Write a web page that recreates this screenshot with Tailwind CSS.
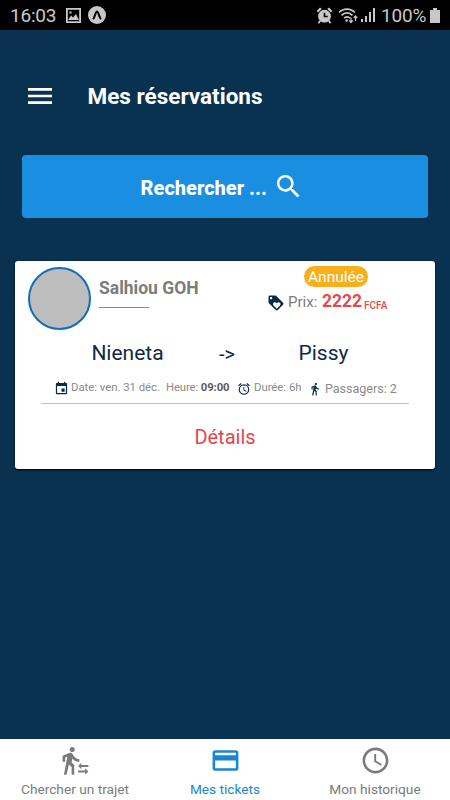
<!DOCTYPE html>
<html lang="fr">
  <head>
    <meta charset="utf-8" />
    <meta name="viewport" content="width=device-width, initial-scale=1" />
    <title>Mes réservations</title>
    <script src="https://cdn.jsdelivr.net/npm/@tailwindcss/browser@4"></script>
  </head>
  <body class="bg-[#093251] font-['Roboto',sans-serif]">
    <div class="flex flex-col h-[800px] w-[450px] overflow-hidden whitespace-nowrap">

      <!-- status bar -->
      <div class="flex items-center h-[30px] shrink-0 bg-black text-[#c8c8c8] pl-2.5 pr-[10px]">
        <span class="text-[19px] leading-[30px] w-14 pt-px tracking-[-0.2px]">16:03</span>
        <svg class="w-[15px] h-[15px]" viewBox="0 0 15 15" fill="none" stroke="currentColor"><path stroke-width="1.800" d="M.9.9h13.200v13.200H.9z"/><path fill="currentColor" stroke="none" d="M2 12l3-4.500 2 2 3-3.500 3 6zM3.500 3.500h2v2h-2z"/></svg>
        <svg class="w-[18px] h-[18px] ml-[7px]" viewBox="0 0 18 18"><circle cx="9" cy="9" r="9" fill="currentColor"/><path d="M5.500 12.500C7 10.500 7.600 5.500 9 5.500s2 5 3.500 7" fill="none" stroke="#000" stroke-width="2" stroke-linecap="round"/></svg>
        <div class="flex items-center ml-auto">
          <svg class="w-[17px] h-[17px]" viewBox="0 0 24 24" fill="currentColor"><path d="M23 5.700l-4.600-5-2.600 2.200 5.300 5zM8.200 2.900L5.600.7 1 5.700l1.900 2.200z"/><circle cx="12" cy="13" r="9"/><path d="M12 8v5.500h4.500" fill="none" stroke="#000" stroke-width="2.200"/><path d="M6 19.500l-2.500 3.500M18 19.500l2.500 3.500" stroke="currentColor" stroke-width="2.500"/></svg>
          <svg class="w-5 h-[17px] ml-[5px]" viewBox="0 0 20 17" fill="none" stroke="currentColor" stroke-width="1.700"><path d="M1 5.500c4.500-4.600 11.500-4.600 16 0M3.500 8.400c3.200-3.300 7.800-3.300 11 0M6 11.200c1.800-1.900 4.200-1.900 6 0"/><circle cx="8.600" cy="13.500" r="1.300" fill="currentColor" stroke="none"/><path stroke-width="1.200" d="M13 10.500v5m-1.700-2l1.700 2 1.700-2M17.500 14V9m-1.700 2l1.700-2 1.700 2"/></svg>
          <svg class="w-[14px] h-[14px] ml-[3px]" viewBox="0 0 14 14" fill="currentColor"><path d="M0 11h2v3H0zM4 8h2v6H4zM8 4h2v10H8zM12 0h2v14h-2z"/></svg>
          <span class="text-[19px] leading-[30px] ml-1.5 w-[47px] pt-px tracking-[-0.2px]">100%</span>
          <svg class="w-[10px] h-[15px] ml-0.5" viewBox="0 0 10 15" fill="currentColor"><path d="M3 0h4v2h3v13H0V2h3z"/></svg>
        </div>
      </div>

      <!-- header -->
      <div class="flex items-center h-[132px] -mb-[7px] pl-6 shrink-0 text-white">
        <svg class="w-8 h-8" viewBox="0 0 24 24" fill="currentColor"><path d="M3 18h18v-2H3v2zm0-5h18v-2H3v2zm0-7v2h18V6H3z"/></svg>
        <h1 class="ml-[31.500px] pt-[2px] text-[22.500px] font-bold">Mes réservations</h1>
      </div>

      <button class="flex items-center justify-center shrink-0 ml-[22px] mr-[22.500px] h-[62.500px] rounded-[4px] bg-[#1a8fe1] text-white pr-[5px]">
        <span class="text-[20px] font-extrabold pt-[3px]">Rechercher ...</span>
        <svg class="w-[31px] h-[31px] ml-1.5" viewBox="0 0 24 24" fill="currentColor"><path d="M15.500 14h-.79l-.28-.27A6.471 6.471 0 0 0 16 9.500 6.500 6.500 0 1 0 9.500 16c1.610 0 3.090-.59 4.230-1.570l.27.28v.79l5 4.990L20.490 19l-4.990-5zm-6 0C7.010 14 5 11.990 5 9.500S7.010 5 9.500 5 14 7.010 14 9.500 11.990 14 9.500 14z"/></svg>
      </button>

      <!-- ticket -->
      <div class="flex flex-col shrink-0 mt-[43.500px] mx-[15px] h-[208px] rounded-[3px] bg-white shadow-[0_1px_2px_#000]">
        <div class="flex shrink-0 h-[73px] pl-[13px] pt-[5.500px]">
          <div class="w-[63px] h-[63px] rounded-full bg-[#bdbdbd] border-2 border-[#0f6fb8]"></div>
          <div class="ml-[8px] pt-[10px] w-[168px]">
            <div class="text-[17.500px] leading-[22px] font-bold text-[#7c7c7c]">Salhiou GOH</div>
            <div class="w-[50px] h-px mt-[8px] bg-[#4c9bd0]"></div>
          </div>
          <div class="w-[136px]">
            <div class="ml-[37px] -mt-[0.500px] w-[64px] h-[21px] rounded-full bg-[#f9ae1b] text-white text-[15.500px] leading-[23px] text-center">Annulée</div>
            <div class="flex items-baseline h-6 mt-[1.500px] leading-6">
              <svg class="w-[18px] h-[18px] self-center mt-1" viewBox="0 0 24 24" fill="#0a2a4a"><path d="M21.410 11.580l-9-9C12.050 2.220 11.550 2 11 2H4c-1.100 0-2 .9-2 2v7c0 .55.22 1.050.59 1.420l9 9c.36.36.86.58 1.410.58.55 0 1.050-.22 1.410-.59l7-7c.37-.36.59-.86.59-1.410 0-.55-.23-1.060-.59-1.420zM5.500 7C4.670 7 4 6.330 4 5.500S4.670 4 5.500 4 7 4.670 7 5.500 6.330 7 5.500 7zm11.770 8.270L13 19.540l-4.270-4.270A2.500 2.500 0 0 1 10.500 11c.69 0 1.320.28 1.770.74l.73.72.73-.73a2.500 2.500 0 0 1 3.540 3.540z"/></svg>
              <span class="ml-[3px] w-[34px] text-[15px] text-[#7c7c7c]">Prix:</span>
              <span class="w-[42px] text-[17.500px] font-bold text-[#e8484c]">2222</span>
              <span class="text-[10px] font-medium text-[#e8484c] relative top-[2px]">FCFA</span>
            </div>
          </div>
        </div>
        <div class="flex shrink-0 items-center h-10 text-[21px] text-[#0f2947]">
          <span class="w-[225px] text-center">Nieneta</span>
          <span class="-ml-[21px] w-[21px] text-[20px]">-&gt;</span>
          <span class="w-[167px] text-center">Pissy</span>
        </div>
        <div class="flex shrink-0 items-center mx-[26px] h-[30px] pl-[13px] border-b-[1.500px] border-[#c0c0c0] text-[11.300px] text-[#8a8a8a]">
          <svg class="w-[15px] h-[15px]" viewBox="0 0 24 24" fill="#0a2a4a"><path d="M17 12h-5v5h5v-5zM16 1v2H8V1H6v2H5c-1.110 0-1.990.9-1.990 2L3 19c0 1.100.89 2 2 2h14c1.100 0 2-.9 2-2V5c0-1.100-.9-2-2-2h-1V1h-2zm3 18H5V8h14v11z"/></svg>
          <span class="ml-[2px] w-[95px]">Date: ven. 31 déc.</span>
          <span class="w-[71px] tracking-[-0.1px]">Heure: <b class="text-[#5c5c5c]">09:00</b></span>
          <svg class="w-[14px] h-[14px]" viewBox="0 0 24 24" fill="#0a2a4a"><path d="M22 5.720l-4.600-3.860-1.290 1.530 4.600 3.860L22 5.720zM7.880 3.390L6.600 1.860 2 5.710l1.290 1.530 4.590-3.850zM12.500 8H11v6l4.750 2.850.75-1.230-4-2.370V8zM12 4a9 9 0 1 0 0 18 9 9 0 0 0 0-18zm0 16a7 7 0 1 1 0-14 7 7 0 0 1 0 14z"/></svg>
          <span class="ml-[3px] w-[54px]">Durée: 6h</span>
          <svg class="w-[14px] h-[14px]" viewBox="0 0 24 24" fill="#0a2a4a"><path d="M13.500 5.500c1.100 0 2-.9 2-2s-.9-2-2-2-2 .9-2 2 .9 2 2 2zM9.800 8.900L7 23h2.100l1.800-8 2.100 2v6h2v-7.500l-2.100-2 .6-3C14.800 12 16.800 13 19 13v-2c-1.900 0-3.500-1-4.300-2.400l-1-1.600c-.4-.6-1-1-1.700-1-.3 0-.5.1-.8.1L6 8.300V13h2V9.600l1.800-.7"/></svg>
          <span class="ml-[3px] text-[12.500px] pt-[2px]">Passagers: 2</span>
        </div>
        <div class="text-center text-[20px] leading-[67px] text-[#e0484c]">Détails</div>
      </div>

      <!-- tabs -->
      <div class="grid grid-cols-3 mt-auto h-[61px] shrink-0 bg-white text-[13.700px] leading-4 text-[#7b7b7b]">
        <div class="flex flex-col items-center pt-[5.500px] gap-[5px]">
          <svg class="w-[31px] h-[31px]" viewBox="0 0 24 24" fill="currentColor"><path d="M16.490 15.500v-1.750L14 16.250l2.490 2.500V17H22v-1.500zm3.020 4.250H14v1.500h5.510V23L22 20.500 19.510 18zM9.500 5.500c1.100 0 2-.9 2-2s-.9-2-2-2-2 .9-2 2 .9 2 2 2zM5.750 8.900L3 23h2.100l1.750-8L9 17v6h2v-7.550L8.950 13.400l.6-3C10.850 12 12.800 13 15 13v-2c-1.850 0-3.450-1-4.350-2.450l-.95-1.600C9.350 6.350 8.700 6 8 6c-.25 0-.5.05-.75.15L2 8.300V13h2V9.650l1.750-.75"/></svg>
          <span>Chercher un trajet</span>
        </div>
        <div class="flex flex-col items-center pt-[5.500px] gap-[5px] text-[#1886d0]">
          <svg class="w-[31px] h-[31px]" viewBox="0 0 24 24" fill="currentColor"><path d="M20 4H4c-1.110 0-1.990.89-1.990 2L2 18c0 1.110.89 2 2 2h16c1.110 0 2-.89 2-2V6c0-1.110-.89-2-2-2zm0 14H4v-6h16v6zm0-10H4V6h16v2z"/></svg>
          <span>Mes tickets</span>
        </div>
        <div class="flex flex-col items-center pt-[5.500px] gap-[5px]">
          <svg class="w-[31px] h-[31px]" viewBox="0 0 24 24" fill="currentColor"><path d="M11.990 2C6.470 2 2 6.480 2 12s4.470 10 9.990 10C17.520 22 22 17.520 22 12S17.520 2 11.990 2zM12 20c-4.420 0-8-3.580-8-8s3.580-8 8-8 8 3.580 8 8-3.580 8-8 8zm.5-13H11v6l5.250 3.150.75-1.230-4.500-2.670z"/></svg>
          <span>Mon historique</span>
        </div>
      </div>
    </div>
  </body>
</html>
